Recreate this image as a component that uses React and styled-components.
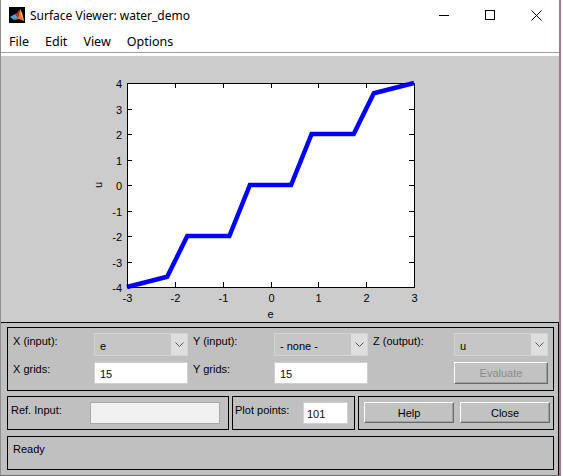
import React from 'react';
import styled, { createGlobalStyle } from 'styled-components';

const GlobalStyle = createGlobalStyle`
  html, body {
    margin: 0;
    padding: 0;
    background: #ffffff;
  }
  * {
    box-sizing: border-box;
  }
`;

const Window = styled.div`
  width: 561px;
  height: 476px;
  display: flex;
  flex-direction: column;
  border-left: 1px solid #8e8e8e;
  border-right: 2px solid #a07a90;
  border-bottom: 1px solid #6e6e6e;
  background: #cccccc;
  overflow: hidden;
`;

const TitleBar = styled.div`
  height: 30px;
  flex: none;
  display: flex;
  align-items: center;
  background: #ffffff;
  padding-left: 8px;
`;

const Title = styled.span`
  margin-left: 5px;
  font-family: "Noto Sans", "Open Sans", sans-serif;
  font-size: 12px;
  color: #000;
  flex: 1;
`;

const Caption = styled.div`
  width: 46px;
  height: 30px;
  display: flex;
  align-items: center;
  justify-content: center;
`;

const MenuBar = styled.div`
  height: 26px;
  flex: none;
  display: flex;
  align-items: flex-start;
  gap: 16px;
  padding-left: 8px;
  background: #ffffff;
  box-shadow: inset 0 -3px 0 #ffffff, inset 0 -4px 0 #a0a0a0;
`;

const MenuItem = styled.span`
  height: 23px;
  line-height: 23px;
  font-family: "Noto Sans", "Open Sans", sans-serif;
  font-size: 12.5px;
  color: #000;
`;

const PlotArea = styled.div`
  height: 266px;
  flex: none;
  background: #cccccc;
`;

const Frame = styled.div`
  flex: 1;
  display: flex;
  flex-direction: column;
  gap: 5px;
  padding: 4px 4px 5px 6px;
  background: #c0c0c0;
  border-top: 1px solid #000;
  border-right: 1px solid #000;
  font-family: "Liberation Sans", Arial, sans-serif;
  font-size: 11px;
  color: #000;
`;

const Panel = styled.div`
  border: 1px solid #000;
  height: ${p => p.$h}px;
  width: ${p => (p.$w ? `${p.$w}px` : 'auto')};
  flex: ${p => (p.$grow ? '1 1 auto' : 'none')};
  padding: ${p => p.$pad || '0'};
  margin-top: ${p => p.$mt || 0}px;
`;

const InputGrid = styled.div`
  display: grid;
  grid-template-columns: repeat(3, 86px 94px);
  grid-auto-rows: 22px;
  row-gap: 6px;
`;

const Row = styled.div`
  display: flex;
  align-items: flex-start;
  gap: ${p => p.$gap || 0}px;
`;

const PanelRow = styled.div`
  display: flex;
  gap: 3px;
`;

const Label = styled.span`
  display: block;
  line-height: 14px;
  padding-left: ${p => p.$pl ?? 5}px;
  padding-top: ${p => p.$pt || 0}px;
  width: ${p => (p.$w ? `${p.$w}px` : 'auto')};
  white-space: nowrap;
`;

const Select = styled.div`
  height: 23px;
  margin-top: -1px;
  display: flex;
  background: #c6c6c6;
  border: 1px solid #d4d4d4;
`;

const SelectValue = styled.span`
  flex: 1;
  padding-left: 5px;
  line-height: 22px;
  padding-top: 1px;
`;

const SelectArrow = styled.span`
  width: 16px;
  display: flex;
  align-items: center;
  justify-content: center;
  background: #dedede;
`;

const TextBox = styled.div`
  height: 22px;
  width: ${p => (p.$w ? `${p.$w}px` : 'auto')};
  background: ${p => (p.$disabled ? '#f0f0f0' : '#ffffff')};
  border: 1px solid ${p => (p.$disabled ? '#a8a8a8' : '#d0d0d0')};
  padding-left: ${p => p.$pl ?? 5}px;
  line-height: 20px;
  padding-top: 1px;
  color: #100828;
`;

const Button = styled.div`
  height: ${p => p.$h || 21}px;
  width: ${p => (p.$w ? `${p.$w}px` : 'auto')};
  display: flex;
  align-items: center;
  justify-content: center;
  background: #c2c2c2;
  border: 1px solid;
  border-color: #ffffff #6a6a6a #6a6a6a #ffffff;
  box-shadow: inset -1px -1px 0 #a0a0a0;
  color: ${p => (p.$disabled ? '#8a8a8a' : '#000')};
`;

const MatlabIcon = () => (
  <svg width="16" height="16" viewBox="0 0 16 16">
    <rect width="16" height="16" fill="#000" />
    <polygon points="1,10 6,7 9,10 5,13" fill="#4aa3d8" />
    <polygon points="5,13 9,10 11,2 13,6 15,14 10,12" fill="#e8762b" />
    <polygon points="11,2 13,6 15,14 12,9" fill="#f5b14a" />
    <polygon points="6,7 9,10 11,2 8,6" fill="#b9361c" />
  </svg>
);

const Chevron = () => (
  <svg width="9" height="5" viewBox="0 0 9 5">
    <polyline points="0.5,0.5 4.5,4.5 8.5,0.5" fill="none" stroke="#5a5a5a" strokeWidth="1" />
  </svg>
);

const X0 = 126;
const Y0 = 27;
const W = 287;
const H = 204;
const xp = e => X0 + ((e + 3) * W) / 6;
const yp = u => Y0 + ((4 - u) * H) / 8;

const curve = [
  [-3, -4], [-2.16, -3.6], [-1.74, -2], [-0.86, -2], [-0.43, 0],
  [0.43, 0], [0.86, 2], [1.74, 2], [2.16, 3.6], [3, 4],
];

function SurfacePlot() {
  const xs = [-3, -2, -1, 0, 1, 2, 3];
  const ys = [-4, -3, -2, -1, 0, 1, 2, 3, 4];
  const tick = 5;
  const labelFont = { fontFamily: '"Liberation Sans", Arial, sans-serif', fontSize: 11 };
  return (
    <svg width="558" height="266" viewBox="0 0 558 266">
      <rect x={X0} y={Y0} width={W} height={H} fill="#fff" />
      <polyline
        points={curve.map(([e, u]) => `${xp(e)},${yp(u)}`).join(' ')}
        fill="none"
        stroke="#0000ff"
        strokeWidth="4.5"
      />
      <rect x={X0 + 0.5} y={Y0 + 0.5} width={W} height={H} fill="none" stroke="#000" strokeWidth="1" />
      {xs.map(v => {
        const x = Math.round(xp(v)) + 0.5;
        return (
          <g key={`x${v}`}>
            <line x1={x} y1={Y0} x2={x} y2={Y0 + tick} stroke="#000" />
            <line x1={x} y1={Y0 + H} x2={x} y2={Y0 + H - tick} stroke="#000" />
            <text x={x} y={Y0 + H + 15} textAnchor="middle" style={labelFont}>{v}</text>
          </g>
        );
      })}
      {ys.map(v => {
        const y = Math.round(yp(v)) + 0.5;
        return (
          <g key={`y${v}`}>
            <line x1={X0} y1={y} x2={X0 + tick} y2={y} stroke="#000" />
            <line x1={X0 + W} y1={y} x2={X0 + W - tick} y2={y} stroke="#000" />
            <text x={X0 - 5} y={y + 4} textAnchor="end" style={labelFont}>{v}</text>
          </g>
        );
      })}
      <text x={X0 + W / 2} y={Y0 + H + 31} textAnchor="middle" style={labelFont}>e</text>
      <text
        x="0"
        y="0"
        textAnchor="middle"
        transform={`translate(101 ${Y0 + H / 2}) rotate(-90)`}
        style={labelFont}
      >
        u
      </text>
    </svg>
  );
}

function Dropdown({ value }) {
  return (
    <Select>
      <SelectValue>{value}</SelectValue>
      <SelectArrow><Chevron /></SelectArrow>
    </Select>
  );
}

export default function App() {
  return (
    <>
      <GlobalStyle />
      <Window>
        <TitleBar>
          <MatlabIcon />
          <Title>Surface Viewer: water_demo</Title>
          <Caption>
            <svg width="10" height="1"><rect width="10" height="1" fill="#000" /></svg>
          </Caption>
          <Caption>
            <svg width="10" height="10"><rect x="0.5" y="0.5" width="9" height="9" fill="none" stroke="#000" /></svg>
          </Caption>
          <Caption>
            <svg width="11" height="11"><path d="M0.5 0.5 L10.5 10.5 M10.5 0.5 L0.5 10.5" stroke="#000" /></svg>
          </Caption>
        </TitleBar>
        <MenuBar>
          <MenuItem>File</MenuItem>
          <MenuItem>Edit</MenuItem>
          <MenuItem>View</MenuItem>
          <MenuItem>Options</MenuItem>
        </MenuBar>
        <PlotArea>
          <SurfacePlot />
        </PlotArea>
        <Frame>
          <Panel $h={64} $pad="6px 0 0 0">
            <InputGrid>
              <Label>X (input):</Label>
              <Dropdown value="e" />
              <Label>Y (input):</Label>
              <Dropdown value="- none -" />
              <Label>Z (output):</Label>
              <Dropdown value="u" />
              <Label>X grids:</Label>
              <TextBox>15</TextBox>
              <Label>Y grids:</Label>
              <TextBox>15</TextBox>
              <span />
              <Button $h={22} $disabled>Evaluate</Button>
            </InputGrid>
          </Panel>
          <PanelRow>
            <Panel $h={34} $w={222} $pad="5px 0 0 3px">
              <Row>
                <Label $pl={0} $pt={1} $w={79}>Ref. Input:</Label>
                <TextBox $w={130} $disabled />
              </Row>
            </Panel>
            <Panel $h={34} $w={123} $pad="5px 0 0 2px">
              <Row>
                <Label $pl={0} $pt={1} $w={68}>Plot points:</Label>
                <TextBox $w={45} $pl={3}>101</TextBox>
              </Row>
            </Panel>
            <Panel $h={34} $grow $pad="5px 0 0 5px">
              <Row $gap={6}>
                <Button $w={90}>Help</Button>
                <Button $w={90}>Close</Button>
              </Row>
            </Panel>
          </PanelRow>
          <Panel $h={34} $mt={1} $pad="5px 0 0 5px">
            <Label $pl={0}>Ready</Label>
          </Panel>
        </Frame>
      </Window>
    </>
  );
}
